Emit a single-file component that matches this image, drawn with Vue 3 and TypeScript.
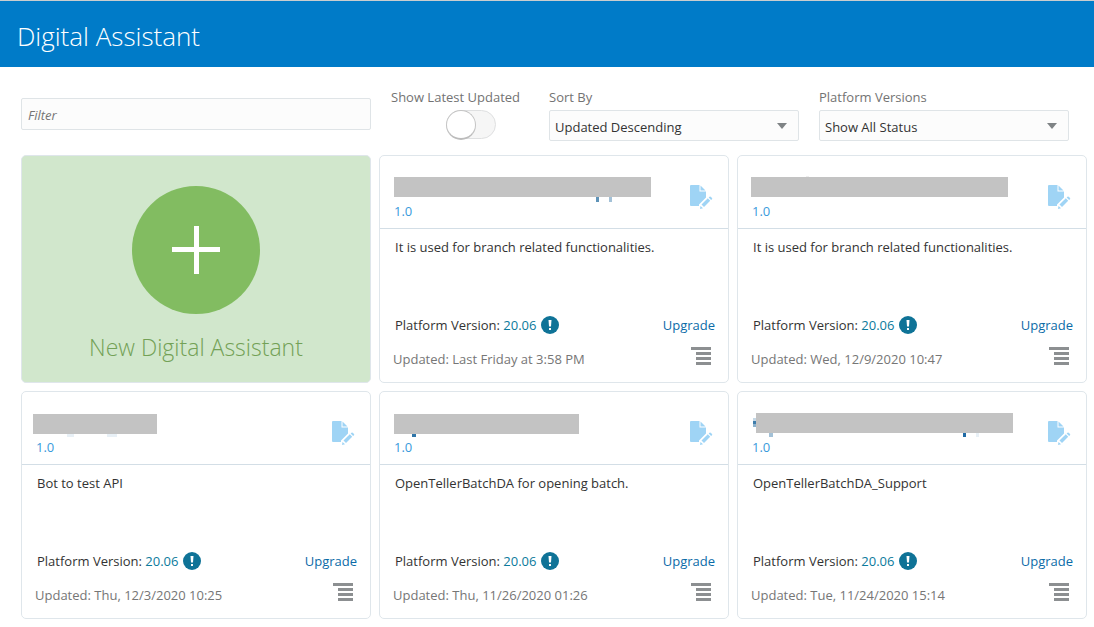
<script setup lang="ts">
import { ref } from 'vue'

interface Block {
  x: number
  y: number
  w: number
  h: number
  fill: string
}

interface Assistant {
  id: number
  mask: Block[]
  version: string
  description: string
  platform: string
  updated: string
}

const GREY = '#c3c3c3'

const filter = ref('')
const latestOnly = ref(false)
const sortBy = ref('Updated Descending')
const status = ref('Show All Status')

const sortOptions = ['Updated Descending', 'Updated Ascending', 'Name Ascending', 'Name Descending']
const statusOptions = ['Show All Status', 'Current', 'Upgrade Available']

const assistants: Assistant[] = [
  {
    id: 1,
    mask: [
      { x: 3, y: 1, w: 257, h: 20, fill: GREY },
      { x: 205, y: 21, w: 3, h: 5, fill: '#5f93b8' },
      { x: 218, y: 21, w: 3, h: 5, fill: '#a3c1d7' },
    ],
    version: '1.0',
    description: 'It is used for branch related functionalities.',
    platform: '20.06',
    updated: 'Last Friday at 3:58 PM',
  },
  {
    id: 2,
    mask: [
      { x: 57, y: 0, w: 3, h: 1, fill: '#eeeeee' },
      { x: 2, y: 1, w: 257, h: 20, fill: GREY },
    ],
    version: '1.0',
    description: 'It is used for branch related functionalities.',
    platform: '20.06',
    updated: 'Wed, 12/9/2020 10:47',
  },
  {
    id: 3,
    mask: [
      { x: 0, y: 2, w: 124, h: 20, fill: GREY },
      { x: 34, y: 22, w: 7, h: 3, fill: '#e8f0f6' },
      { x: 74, y: 22, w: 10, h: 3, fill: '#e8f0f6' },
    ],
    version: '1.0',
    description: 'Bot to test API',
    platform: '20.06',
    updated: 'Thu, 12/3/2020 10:25',
  },
  {
    id: 4,
    mask: [
      { x: 3, y: 2, w: 185, h: 20, fill: GREY },
      { x: 21, y: 22, w: 4, h: 3, fill: '#2f75a8' },
    ],
    version: '1.0',
    description: 'OpenTellerBatchDA for opening batch.',
    platform: '20.06',
    updated: 'Thu, 11/26/2020 01:26',
  },
  {
    id: 5,
    mask: [
      { x: 4, y: 6, w: 3, h: 3, fill: '#c5d8e6' },
      { x: 4, y: 9, w: 3, h: 3, fill: '#3f7dab' },
      { x: 4, y: 12, w: 3, h: 3, fill: '#8db2cd' },
      { x: 7, y: 1, w: 257, h: 20, fill: GREY },
      { x: 20, y: 21, w: 4, h: 4, fill: '#a3c1d7' },
      { x: 214, y: 21, w: 3, h: 4, fill: '#1f6aa5' },
      { x: 227, y: 21, w: 3, h: 4, fill: '#e8f0f6' },
    ],
    version: '1.0',
    description: 'OpenTellerBatchDA_Support',
    platform: '20.06',
    updated: 'Tue, 11/24/2020 15:14',
  },
]
</script>

<template>
  <div class="app">
    <header class="banner">
      <h1>Digital Assistant</h1>
    </header>

    <main>
      <form class="toolbar" @submit.prevent>
        <input v-model="filter" class="filter" type="text" placeholder="Filter" aria-label="Filter" />
        <div class="options">
          <div class="field switch-field">
            <label for="latest">Show Latest Updated</label>
            <input id="latest" v-model="latestOnly" class="switch" type="checkbox" role="switch" />
          </div>
          <div class="field select-field">
            <label for="sort">Sort By</label>
            <div class="select">
              <select id="sort" v-model="sortBy">
                <option v-for="o in sortOptions" :key="o">{{ o }}</option>
              </select>
              <svg width="10" height="6" viewBox="0 0 10 6" aria-hidden="true"><path d="M0 0h10L5 6z" fill="#7f8385" /></svg>
            </div>
          </div>
          <div class="field select-field">
            <label for="platform">Platform Versions</label>
            <div class="select">
              <select id="platform" v-model="status">
                <option v-for="o in statusOptions" :key="o">{{ o }}</option>
              </select>
              <svg width="10" height="6" viewBox="0 0 10 6" aria-hidden="true"><path d="M0 0h10L5 6z" fill="#7f8385" /></svg>
            </div>
          </div>
        </div>
      </form>

      <section class="grid">
        <button type="button" class="card new-card">
          <svg width="128" height="128" viewBox="0 0 128 128" aria-hidden="true">
            <circle cx="64" cy="64" r="64" fill="#82bc61" />
            <path d="M40 61h22V40h5v21h21v5H67v22h-5V66H40z" fill="#fff" />
          </svg>
          <span>New Digital Assistant</span>
        </button>

        <article v-for="a in assistants" :key="a.id" class="card">
          <div class="card-head">
            <div class="identity">
              <svg class="mask" width="264" height="26" viewBox="0 0 264 26" aria-hidden="true">
                <rect v-for="(b, i) in a.mask" :key="i" :x="b.x" :y="b.y" :width="b.w" :height="b.h" :fill="b.fill" />
              </svg>
              <span class="version">{{ a.version }}</span>
            </div>
            <button type="button" class="icon-button" aria-label="Edit draft">
              <svg width="23" height="25" viewBox="0 0 23 25" fill="#9fd4f5">
                <path d="M1 0H9.500V6.500H16V12.5L9 19.5V21H1Q0 21 0 20V1Q0 0 1 0Z" />
                <path d="M10.5 0.5V5.5H15.500Z" />
                <path d="M11.500 19.500L17.800 13.300L20.200 15.700L14 22Z" />
                <path d="M10.500 21L13 23.200L10 24Z" />
                <path d="M18.700 12.500L19.500 11.700Q20.100 11.300 20.700 11.800L22 13.100Q22.500 13.700 22 14.200L21.100 15Z" />
              </svg>
            </button>
          </div>

          <div class="card-body">
            <p class="description">{{ a.description }}</p>
            <div class="row platform">
              <span>Platform Version: <a href="#">{{ a.platform }}</a></span>
              <svg width="18" height="18" viewBox="0 0 18 18" aria-hidden="true">
                <circle cx="9" cy="9" r="9" fill="#0f7397" />
                <path d="M7.500 4H10.500L10 10.500H8zM8 12h2v2H8z" fill="#fff" />
              </svg>
              <a href="#" class="upgrade">Upgrade</a>
            </div>
            <div class="row updated">
              <span>Updated: {{ a.updated }}</span>
              <button type="button" class="icon-button" aria-label="Options">
                <svg width="20" height="18" viewBox="0 0 20 18" fill="#8c8f91">
                  <path d="M0 0h20v3H0zM5 5h15v3H5zM5 10h15v3H5zM5 15h15v3H5z" />
                </svg>
              </button>
            </div>
          </div>
        </article>
      </section>
    </main>
  </div>
</template>

<style>
body {
  margin: 0;
  background: #fff;
}
</style>

<style scoped>
.app {
  font-family: "Open Sans", "Noto Sans", sans-serif;
  font-size: 13px;
  line-height: 20px;
  color: #333;
}

.app *,
.app *::before {
  box-sizing: border-box;
}

button,
input,
select {
  font: inherit;
  color: inherit;
  margin: 0;
}

a {
  color: #0b72a0;
  text-decoration: none;
}

.banner {
  display: flex;
  align-items: center;
  height: 67px;
  padding: 4px 17px 0;
  border-top: 1px solid #c9cdcf;
  background: #007bc8;
}

h1 {
  margin: 0;
  font-size: 26px;
  line-height: 36px;
  font-weight: 300;
  color: #fff;
}

.toolbar {
  display: grid;
  grid-template-columns: repeat(3, 1fr);
  column-gap: 8px;
  padding: 20px 7px 14px 21px;
}

.filter {
  width: 100%;
  height: 32px;
  margin-top: 11px;
  padding: 2px 6px 0;
  border: 1px solid #dfe4e7;
  border-radius: 2px;
  background: #fcfcfc;
}

.filter::placeholder {
  font-style: italic;
  color: #757575;
  opacity: 1;
}

.options {
  display: flex;
  grid-column: span 2;
  padding: 0 18px 0 12px;
}

.field {
  display: flex;
  flex-direction: column;
}

.field label {
  height: 23px;
  color: #737373;
  white-space: nowrap;
}

.switch-field {
  flex: none;
  width: 158px;
}

.switch {
  appearance: none;
  width: 50px;
  height: 29px;
  margin-left: 55px;
  border: 1px solid #dfe0e1;
  border-radius: 15px;
  background: #f6f6f6;
}

.switch::before {
  content: "";
  display: block;
  width: 30px;
  height: 30px;
  margin: -1px;
  border: 1px solid #c4c4c4;
  border-bottom: 2px solid #bcbcbc;
  border-radius: 50%;
  background: #fff;
}

.switch:checked::before {
  margin-left: 19px;
}

.select-field {
  flex: 1;
}

.select-field + .select-field {
  margin-left: 20px;
}

.select {
  display: grid;
  align-items: center;
}

.select select {
  grid-area: 1 / 1;
  appearance: none;
  width: 100%;
  height: 31px;
  padding: 2px 30px 0 5px;
  border: 1px solid #dfe4e7;
  border-radius: 2px;
  background: #fcfcfc;
}

.select svg {
  grid-area: 1 / 1;
  justify-self: end;
  margin-right: 12px;
  pointer-events: none;
}

.grid {
  display: grid;
  grid-template-columns: repeat(3, 1fr);
  gap: 8px;
  padding: 0 7px 8px 21px;
}

.card {
  min-height: 228px;
  border: 1px solid #dfe6eb;
  border-radius: 5px;
  background: #fff;
}

.new-card {
  display: flex;
  flex-direction: column;
  align-items: center;
  padding: 30px 0 0;
  background: #d1e7cc;
  font-size: 23px;
  line-height: 36px;
  font-weight: 300;
  color: #73a156;
}

.new-card span {
  margin-top: 15px;
}

.card-head {
  display: flex;
  justify-content: space-between;
  align-items: flex-start;
  height: 73px;
  padding: 20px 15px 0 11px;
  border-bottom: 1px solid #d3dee6;
}

.identity {
  display: flex;
  flex-direction: column;
}

.mask {
  display: block;
}

.version {
  padding-left: 3px;
  line-height: 18px;
  color: #3a9bdc;
}

.icon-button {
  display: block;
  padding: 0;
  border: 0;
  background: none;
}

.icon-button svg {
  display: block;
}

.card-head .icon-button {
  margin-top: 9px;
}

.description {
  height: 78px;
  margin: 0;
}

.card-body {
  padding: 8px 13px 0 15px;
}

.row {
  display: flex;
  align-items: center;
}

.platform {
  gap: 5px;
}

.platform a {
  color: #0b7a9c;
}

.platform .upgrade {
  margin-left: auto;
  color: #0b6ba8;
}

.updated {
  justify-content: space-between;
  margin: 12px 4px 0 -2px;
  color: #767676;
}

.updated .icon-button {
  margin-bottom: 6px;
}
</style>
